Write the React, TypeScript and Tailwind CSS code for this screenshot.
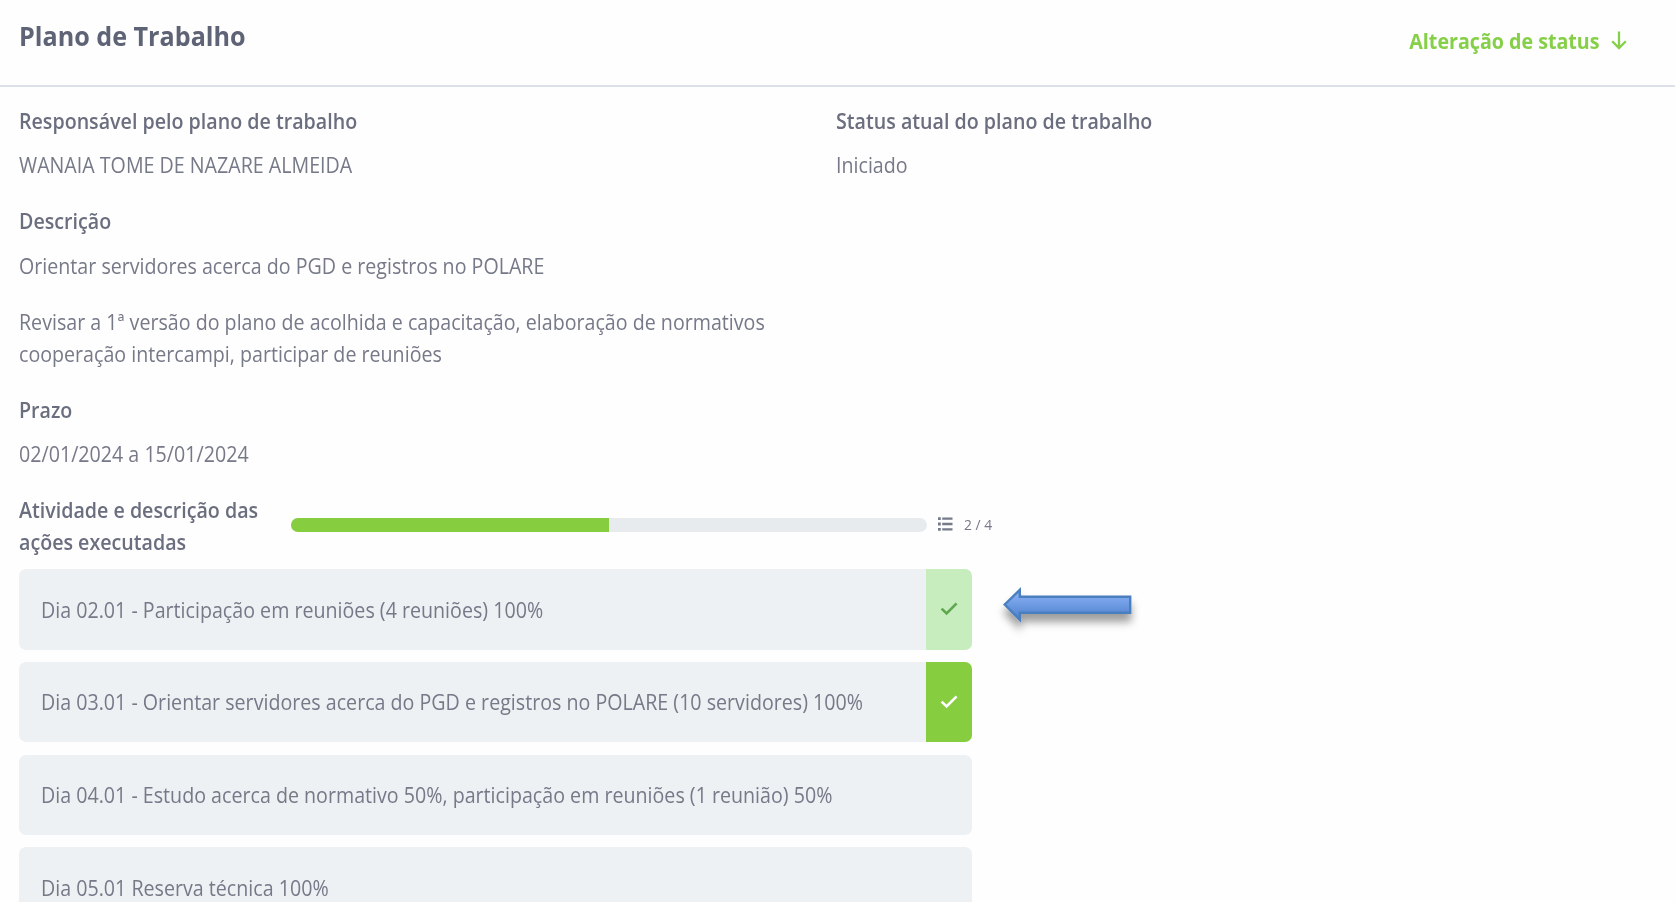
import type { ReactNode } from "react";

function Line({ children, className = "" }: { children: ReactNode; className?: string }) {
  return (
    <span className={`block w-max origin-left scale-x-[0.921] whitespace-nowrap ${className}`}>
      {children}
    </span>
  );
}

function Field({ label, children }: { label: string; children: ReactNode }) {
  return (
    <section>
      <h2 className="mb-[12.6px] font-semibold text-[#6a6e7e]">
        <Line>{label}</Line>
      </h2>
      {children}
    </section>
  );
}

function CheckIcon() {
  return (
    <svg width="18" height="14" viewBox="0 0 18 14" fill="none" stroke="currentColor" strokeWidth="2.7">
      <path d="M1.6 6.6 6.6 11.4 16.6 1.4" />
    </svg>
  );
}

function ListIcon() {
  return (
    <svg width="15" height="14" viewBox="0 0 15 14" fill="#777a89">
      <path d="M0 .2h2.8v2.8H0zM0 5.6h2.8v2.8H0zM0 11h2.8v2.8H0zM4.2.4h10.3v2.4H4.2zM4.2 5.8h10.3v2.4H4.2zM4.2 11.2h10.3v2.4H4.2z" />
    </svg>
  );
}

function PointerArrow() {
  return (
    <svg
      className="absolute top-[11.3px] left-[976.3px]"
      width="150"
      height="64"
      viewBox="0 0 150 64"
    >
      <defs>
        <linearGradient id="arrow-fill" x1="0" y1="0" x2="0" y2="1">
          <stop offset="0.2" stopColor="#82abf0" />
          <stop offset="0.85" stopColor="#5587d2" />
        </linearGradient>
        <filter id="arrow-shadow" x="-20%" y="-50%" width="140%" height="220%">
          <feDropShadow dx="0" dy="8" stdDeviation="4.5" floodColor="#000" floodOpacity="0.38" />
        </filter>
      </defs>
      <path
        d="M9.7 23.5 24.8 8.9V15.7H135.2V31.7H24.8V38.9Z"
        fill="url(#arrow-fill)"
        stroke="#4a7fbf"
        strokeWidth="2.4"
        filter="url(#arrow-shadow)"
      />
    </svg>
  );
}

type Status = "checking" | "done" | "open";

const activities: { text: string; status: Status }[] = [
  { text: "Dia 02.01 - Participação em reuniões (4 reuniões) 100%", status: "checking" },
  {
    text: "Dia 03.01 - Orientar servidores acerca do PGD e registros no POLARE (10 servidores) 100%",
    status: "done",
  },
  {
    text: "Dia 04.01 - Estudo acerca de normativo 50%, participação em reuniões (1 reunião) 50%",
    status: "open",
  },
  { text: "Dia 05.01 Reserva técnica 100%", status: "open" },
];

const badge: Record<Status, string> = {
  checking: "bg-[#c7edbf] text-[#60a850]",
  done: "bg-[#86cd3f] text-white",
  open: "hidden",
};

export default function App() {
  return (
    <div className="h-[902px] overflow-hidden bg-[#fefefe] font-['Open_Sans','Noto_Sans',sans-serif] text-[21.33px] leading-8 text-[#767987]">
      <header className="flex h-[87px] items-start justify-between border-b-2 border-[#dce1e9] pl-[18.9px]">
        <h1 className="pt-[16px] text-[27.3px] leading-10 font-bold text-[#5e6375]">
          <Line>Plano de Trabalho</Line>
        </h1>
        <button className="flex items-center pt-[24.7px] pr-[48.3px] font-bold text-[#86cf48]">
          <Line className="origin-right">Alteração de status</Line>
          <svg className="ml-[11px]" width="16" height="19" viewBox="0 0 16 19" fill="none" stroke="currentColor" strokeWidth="2.3">
            <path d="M8 .5V17M1.2 10.2 8 17 14.8 10.2" />
          </svg>
        </button>
      </header>

      <main className="pt-[17.7px] pl-[18.9px]">
        <div className="grid grid-cols-[817.3px_1fr]">
          <Field label="Responsável pelo plano de trabalho">
            <Line>WANAIA TOME DE NAZARE ALMEIDA</Line>
          </Field>
          <Field label="Status atual do plano de trabalho">
            <Line>Iniciado</Line>
          </Field>
        </div>

        <div className="mt-[23.7px]">
          <Field label="Descrição">
            <Line>Orientar servidores acerca do PGD e registros no POLARE</Line>
            <p className="mt-6">
              <Line>Revisar a 1ª versão do plano de acolhida e capacitação, elaboração de normativos</Line>
              <Line>cooperação intercampi, participar de reuniões</Line>
            </p>
          </Field>
        </div>

        <div className="mt-6">
          <Field label="Prazo">
            <Line>02/01/2024 a 15/01/2024</Line>
          </Field>
        </div>

        <div className="mt-[23.4px] flex items-center">
          <h2 className="w-[272px] font-semibold text-[#6a6e7e]">
            <Line>Atividade e descrição das</Line>
            <Line>ações executadas</Line>
          </h2>
          <div className="mb-[2px] h-[14px] w-[636.5px] overflow-hidden rounded-full bg-[#e8ebee]">
            <div className="h-full w-1/2 bg-[#86cd3f]" />
          </div>
          <div className="mb-[2.4px] ml-[10.9px] flex items-center gap-[11px] text-[15px] leading-5">
            <ListIcon />
            <Line>2 / 4</Line>
          </div>
        </div>

        <ul className="mt-[11.7px] flex flex-col gap-[12.3px]">
          {activities.map((activity) => (
            <li key={activity.text} className="relative h-[80.4px]">
              <div className="flex h-full w-[953.4px] items-stretch overflow-hidden rounded-[7px] bg-[#edf1f4]">
                <div className="min-w-0 flex-1 pt-[24.4px] pl-[22.3px]">
                  <Line>{activity.text}</Line>
                </div>
                <div className={`flex w-[46.3px] shrink-0 items-center justify-center ${badge[activity.status]}`}>
                  <CheckIcon />
                </div>
              </div>
              {activity.status === "checking" && <PointerArrow />}
            </li>
          ))}
        </ul>
      </main>
    </div>
  );
}
